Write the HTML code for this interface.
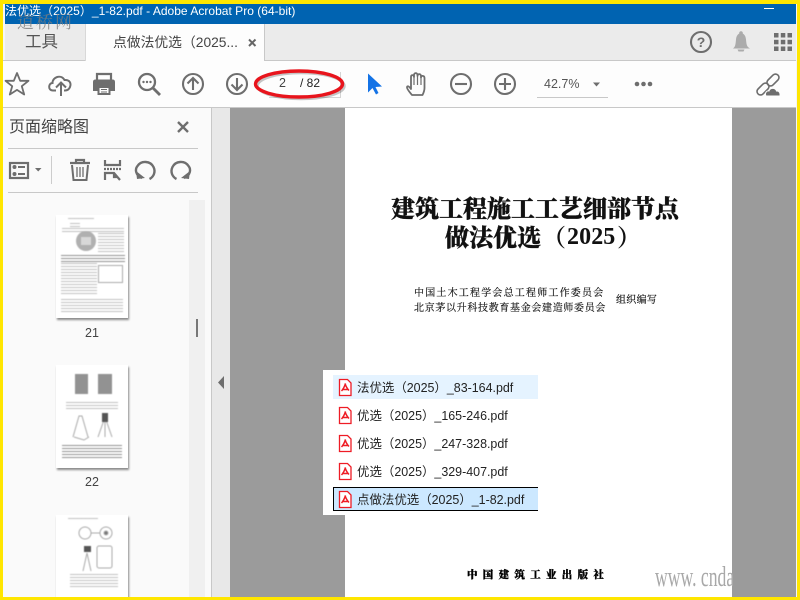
<!DOCTYPE html>
<html><head><meta charset="utf-8"><style>
html,body{margin:0;padding:0;width:800px;height:600px;overflow:hidden;background:#fff}
body{position:relative;font-family:"Liberation Sans","Noto Sans CJK SC",sans-serif}
.a{position:absolute;white-space:nowrap}
svg{position:absolute;overflow:visible}
.th{position:absolute;left:56px;width:72px;background:#fff;box-shadow:1px 2px 2px rgba(0,0,0,.45);overflow:hidden}
.th>.in{position:absolute;left:0;top:0;width:72px;height:110px;filter:blur(.45px)}
.ln{position:absolute;background:repeating-linear-gradient(to bottom,#777 0,#777 1px,#fff 1px,#fff 3px);opacity:.45}
.it{position:absolute;left:333px;width:205px;height:24px;box-sizing:border-box;font-size:12.45px;line-height:25px;color:#222}
.it span{position:absolute;left:24px;top:1px;white-space:nowrap}
.pg{font-family:"Noto Serif CJK SC","Liberation Serif",serif;color:#111}
</style></head><body>
<!-- chrome backgrounds -->
<div class="a" style="left:0;top:4px;width:800px;height:20px;background:#0063b1"></div>
<div class="a" style="left:0;top:24px;width:800px;height:36px;background:#ebebeb"></div>
<div class="a" style="left:3px;top:4px;width:2px;height:57px;background:#f6f6f6"></div>
<div class="a" style="left:0;top:60px;width:800px;height:1px;background:#c8c8c8"></div>
<div class="a" style="left:85px;top:24px;width:180px;height:37px;background:#fdfdfd;border-left:1px solid #d8d8d8;border-right:1px solid #c8c8c8;box-sizing:border-box"></div>
<div class="a" style="left:0;top:61px;width:800px;height:46px;background:#fdfdfd"></div>
<div class="a" style="left:0;top:107px;width:800px;height:1px;background:#c8c8c8"></div>
<!-- title -->
<div class="a" style="left:5px;top:4px;height:20px;line-height:15px;font-size:12px;color:#fff;letter-spacing:.02px">法优选（2025）_1-82.pdf - Adobe Acrobat Pro (64-bit)</div>
<div class="a" style="left:764px;top:8px;width:10px;height:1px;background:#fff"></div>
<div class="a" style="left:17px;top:9px;font-size:17px;line-height:24px;letter-spacing:2px;color:rgba(125,125,125,.8);font-family:'Noto Serif CJK SC',serif">道桥网</div>
<!-- tab row -->
<div class="a" style="left:25px;top:30px;font-size:16.5px;line-height:24px;color:#555">工具</div>
<div class="a" style="left:113px;top:33px;font-size:13.8px;line-height:20px;color:#444">点做法优选（2025...</div>
<svg style="left:0;top:0" width="800" height="110" fill="none">
<path d="M249 39.500l6.500 6.500M255.500 39.500l-6.500 6.500" stroke="#666" stroke-width="2"/>
<circle cx="701" cy="42" r="10" stroke="#6e6e6e" stroke-width="2.100"/>
<text x="701" y="47" text-anchor="middle" font-size="14" font-weight="bold" fill="#6e6e6e" font-family="Liberation Sans">?</text>
<path d="M733 48.500c2.500-2 2.500-4 3-9 .4-4 2-6 5-6.500 3 .5 4.600 2.500 5 6.500.5 5 .5 7 4 9z" fill="#ababab"/><circle cx="741" cy="33" r="1.800" fill="#ababab"/><path d="M737.500 49.500h7l-1 2h-5z" fill="#ababab"/>
<g fill="#6e6e6e"><rect x="774" y="33" width="4.500" height="4.500"/><rect x="780.800" y="33" width="4.500" height="4.500"/><rect x="787.500" y="33" width="4.500" height="4.500"/><rect x="774" y="39.800" width="4.500" height="4.500"/><rect x="780.800" y="39.800" width="4.500" height="4.500"/><rect x="787.500" y="39.800" width="4.500" height="4.500"/><rect x="774" y="46.500" width="4.500" height="4.500"/><rect x="780.800" y="46.500" width="4.500" height="4.500"/><rect x="787.500" y="46.500" width="4.500" height="4.500"/></g>
<!-- toolbar icons -->
<path d="M17 73l3.200 7.800h8.300l-6.700 5.400 2.400 8.300-7.200-4.600-7.200 4.600 2.400-8.300-6.700-5.400h8.300z" stroke="#6e6e6e" stroke-width="1.800" stroke-linejoin="round"/>
<path d="M57 90.500h-3c-5.500 0-4.500-7.500-.5-7.500 0-6 8.500-9 12-3 5-.5 7 3 5.500 7-.8 2-2.500 3.500-5 3.500h-1" stroke="#6e6e6e" stroke-width="2" transform="translate(-1 0)"/>
<path d="M61 96V83M56 87.500l5-5 5 5" stroke="#6e6e6e" stroke-width="2"/>
<path d="M97 80v-6h14v6" stroke="#6e6e6e" stroke-width="2.200"/>
<path d="M93 82q0-2.500 2.500-2.500h17q2.500 0 2.500 2.500v9h-5v-3h-12v3h-5z" fill="#6e6e6e"/>
<path d="M98.500 86h11v8h-11z" stroke="#6e6e6e" stroke-width="2"/><path d="M101 89.500h6M101 92h6" stroke="#6e6e6e"/>
<circle cx="147" cy="82" r="8" stroke="#6e6e6e" stroke-width="2.300"/><path d="M153 88l7 7" stroke="#6e6e6e" stroke-width="2.800"/>
<g fill="#6e6e6e"><circle cx="143.500" cy="82" r="1.200"/><circle cx="147" cy="82" r="1.200"/><circle cx="150.500" cy="82" r="1.200"/></g>
<circle cx="193" cy="84" r="10" stroke="#6e6e6e" stroke-width="2.100"/><path d="M193 90V78M187.500 83.500l5.500-5.500 5.500 5.500" stroke="#6e6e6e" stroke-width="2.100"/>
<circle cx="237" cy="84" r="10" stroke="#6e6e6e" stroke-width="2.100"/><path d="M237 78v12M231.500 84.500l5.500 5.500 5.500-5.500" stroke="#6e6e6e" stroke-width="2.100"/>
<path d="M368 73.500v19l4.500-4.500 3.500 6.500 2.500-1.500-3-6 6.500-.5z" fill="#1473e6"/>
<path d="M412 95c-1.500-2-5.500-6-5-8 .6-2 3 .5 4 2V77c0-2.500 3-2.500 3 0v-2c0-2.500 3.500-2.500 3.500 0v1c0-2.500 3.500-2.500 3.500 0v1.500c0-2.500 3.500-2 3.500 .5V88c0 3-1 5-2 7z" stroke="#6e6e6e" stroke-width="1.800" stroke-linejoin="round"/>
<path d="M414 77v8M417.500 76v9M421 77v8" stroke="#6e6e6e" stroke-width="1.200"/>
<circle cx="461" cy="84" r="10" stroke="#6e6e6e" stroke-width="2.100"/><path d="M455 84h12" stroke="#6e6e6e" stroke-width="2.100"/>
<circle cx="505" cy="84" r="10" stroke="#6e6e6e" stroke-width="2.100"/><path d="M499 84h12M505 78v12" stroke="#6e6e6e" stroke-width="2.100"/>
<path d="M593 82.500h7l-3.500 4z" fill="#6e6e6e"/>
<rect x="537" y="97" width="71" height="1" fill="#c8c8c8"/>
<g fill="#6e6e6e"><circle cx="637" cy="84" r="2.300"/><circle cx="643.500" cy="84" r="2.300"/><circle cx="650" cy="84" r="2.300"/></g>
<rect x="766" y="76.500" width="14" height="7" rx="3.500" transform="rotate(-45 773 80)" stroke="#6e6e6e" stroke-width="1.600"/>
<rect x="756" y="85.500" width="14" height="7" rx="3.500" transform="rotate(-45 763 89)" stroke="#6e6e6e" stroke-width="1.600"/>
<path d="M766 96c-1.500-3 .5-5.500 3-5 1-3.500 6.500-3.500 7.500 0 2.800-.5 4 2.500 3.500 5z" fill="#6e6e6e" stroke="#fdfdfd" stroke-width="1"/>
<!-- page number input + oval -->
<path d="M269 97.500h71M340.500 72v26" stroke="#d4d4d4"/>
<ellipse cx="301" cy="86" rx="43.500" ry="13" stroke="#444" stroke-width="2.500" opacity=".3"/>
<ellipse cx="299" cy="84" rx="43.500" ry="13" stroke="#e8141c" stroke-width="3.400"/>
</svg>
<div class="a" style="left:279px;top:75px;font-size:12.5px;line-height:16px;color:#444">2</div>
<div class="a" style="left:300px;top:75px;font-size:12px;line-height:16px;color:#222">/ 82</div>
<div class="a" style="left:544px;top:76px;font-size:12.5px;line-height:16px;color:#555">42.7%</div>
<!-- sidebar -->
<div class="a" style="left:0;top:108px;width:211px;height:492px;background:#fafafa"></div>
<div class="a" style="left:211px;top:108px;width:1px;height:492px;background:#c8c8c8"></div>
<div class="a" style="left:212px;top:108px;width:18px;height:492px;background:#e8e8e8"></div>
<div class="a" style="left:9px;top:116px;font-size:16px;line-height:24px;color:#444">页面缩略图</div>
<div class="a" style="left:8px;top:148px;width:190px;height:1px;background:#c8c8c8"></div>
<div class="a" style="left:8px;top:192px;width:190px;height:1px;background:#c8c8c8"></div>
<div class="a" style="left:51px;top:156px;width:1px;height:28px;background:#ccc"></div>
<div class="a" style="left:189px;top:200px;width:16px;height:400px;background:#f0f0f0"></div>
<div class="a" style="left:196px;top:319px;width:2px;height:18px;background:#777"></div>
<svg style="left:0;top:108px" width="230" height="300" fill="none">
<path d="M178 14l10 10M188 14l-10 10" stroke="#6e6e6e" stroke-width="2.400"/>
<rect x="10" y="55" width="18" height="15" stroke="#6e6e6e" stroke-width="2.200"/>
<g fill="#6e6e6e"><circle cx="14.500" cy="59" r="2"/><circle cx="14.500" cy="66" r="2"/><rect x="18" y="58" width="7" height="2"/><rect x="18" y="65" width="7" height="2"/></g>
<path d="M35 60h6.500l-3.300 3.500z" fill="#6e6e6e"/>
<path d="M70 55h20M76 54.500v-2.500h8v2.500" stroke="#6e6e6e" stroke-width="2.200"/>
<path d="M72 57l1.500 15h13l1.500-15" stroke="#6e6e6e" stroke-width="2"/><path d="M77 59v10M80 59v10M83 59v10" stroke="#6e6e6e" stroke-width="1.300"/>
<path d="M105 52v5h15v-5" stroke="#6e6e6e" stroke-width="2.200"/>
<path d="M104 61h17" stroke="#6e6e6e" stroke-width="2.200" stroke-dasharray="2 1"/>
<path d="M105 72v-7h9l6 7M114 65v4h4" stroke="#6e6e6e" stroke-width="2.200"/>
<path d="M143 71c-7-3-7-9-4.500-12 4-6 13-5 16 1 2.500 5 0 10-4 12" stroke="#6e6e6e" stroke-width="2.400" transform="translate(-1 -1)"/><path d="M136 63l1 8 8-1z" fill="#6e6e6e"/>
<path d="M185 71c7-3 7-9 4.500-12-4-6-13-5-16 1-2.500 5 0 10 4 12" stroke="#6e6e6e" stroke-width="2.400" transform="translate(-1 -1)"/><path d="M190 63l-1 8-8-1z" fill="#6e6e6e"/>
</svg>
<!-- thumbnails -->
<div class="th" style="top:215px;height:103px"><div class="in">
 <div class="ln" style="left:12px;top:3px;width:26px;height:2px"></div>
 <div class="ln" style="left:14px;top:8px;width:10px;height:5px"></div>
 <div class="ln" style="left:6px;top:13px;width:62px;height:4px"></div>
 <div style="position:absolute;left:20px;top:16px;width:20px;height:20px;border-radius:50%;background:#b0b0b0"></div>
 <div style="position:absolute;left:25px;top:22px;width:10px;height:8px;background:#d8d8d8"></div>
 <div class="ln" style="left:42px;top:18px;width:26px;height:20px"></div>
 <div class="ln" style="left:5px;top:40px;width:64px;height:7px;opacity:.8"></div>
 <div class="ln" style="left:5px;top:48px;width:36px;height:33px"></div>
 <div style="position:absolute;left:42px;top:50px;width:25px;height:18px;border:1px solid #aaa;box-sizing:border-box"></div>
 <div class="ln" style="left:5px;top:84px;width:62px;height:13px"></div>
</div></div>
<div class="th" style="top:365px;height:103px"><div class="in">
 <div style="position:absolute;left:19px;top:9px;width:13px;height:20px;background:#777;opacity:.8"></div>
 <div style="position:absolute;left:42px;top:9px;width:14px;height:20px;background:#777;opacity:.8"></div>
 <div class="ln" style="left:10px;top:37px;width:52px;height:7px"></div>
 <svg style="left:0;top:0" width="72" height="103" fill="none" stroke="#aaa"><path d="M17 72l6-21h3l6 21M18 72l10 3 5-3"/><path d="M42 72l6-17h2l6 17M49 55v17"/><rect x="46" y="48" width="6" height="9" fill="#555" stroke="none"/></svg>
 <div class="ln" style="left:6px;top:80px;width:60px;height:13px;opacity:.8"></div>
</div></div>
<div class="th" style="top:515px;height:90px"><div class="in">
 <div class="ln" style="left:12px;top:3px;width:30px;height:2px"></div>
 <svg style="left:0;top:0" width="72" height="90" fill="none" stroke="#aaa"><circle cx="29" cy="18" r="6"/><circle cx="50" cy="18" r="6"/><path d="M35 18h9"/><circle cx="50" cy="18" r="2" fill="#777"/><path d="M27 56l4-18 4 18"/><rect x="41" y="31" width="15" height="22" rx="2"/></svg>
 <div style="position:absolute;left:28px;top:31px;width:7px;height:6px;background:#555"></div>
 <div class="ln" style="left:14px;top:59px;width:48px;height:15px"></div>
</div></div>
<div class="a" style="left:0;top:325px;width:184px;text-align:center;font-size:12.5px;line-height:16px;color:#444">21</div>
<div class="a" style="left:0;top:474px;width:184px;text-align:center;font-size:12.5px;line-height:16px;color:#444">22</div>
<svg style="left:218px;top:376px" width="8" height="13"><path d="M6 0v13L0 6.500z" fill="#6e6e6e"/></svg>
<!-- document area -->
<div class="a" style="left:230px;top:108px;width:567px;height:492px;background:#9b9b9b"></div>
<div class="a" style="left:345px;top:108px;width:387px;height:492px;background:#fff"></div>
<div class="a pg" style="left:391px;top:191px;font-size:24px;line-height:32px;font-weight:900;-webkit-text-stroke:.3px #111">建筑工程施工工艺细部节点</div>
<div class="a pg" style="left:445px;top:220px;font-size:24px;line-height:32px;font-weight:900;-webkit-text-stroke:.3px #111">做法优选</div>
<div class="a pg" style="left:542px;top:220px;font-size:24px;line-height:32px;font-weight:700">（</div>
<div class="a" style="left:567px;top:221px;font-family:'Liberation Serif',serif;font-size:24px;line-height:32px;font-weight:700;color:#111;letter-spacing:.1px">2025</div>
<div class="a pg" style="left:617px;top:220px;font-size:24px;line-height:32px;font-weight:700">）</div>
<div class="a pg" style="left:414px;top:285px;font-size:10px;line-height:14px;letter-spacing:1.2px;-webkit-text-stroke:.15px #111">中国土木工程学会总工程师工作委员会</div>
<div class="a pg" style="left:414px;top:300px;font-size:10px;line-height:14px;letter-spacing:.67px;-webkit-text-stroke:.15px #111">北京茅以升科技教育基金会建造师委员会</div>
<div class="a pg" style="left:616px;top:292px;font-size:10px;line-height:14px;letter-spacing:.3px;-webkit-text-stroke:.15px #111">组织编写</div>
<div class="a pg" style="left:467px;top:567px;font-size:10.5px;line-height:16px;letter-spacing:5.3px;font-weight:900;color:#000;-webkit-text-stroke:.3px #000">中国建筑工业出版社</div>
<div class="a" style="left:655px;top:560px;width:78px;height:36px;overflow:hidden"><div style="font-family:'Liberation Serif',serif;font-size:28px;line-height:36px;color:#a8a8a8;transform:scaleX(.63);transform-origin:0 0;white-space:nowrap">www. cnda</div></div>
<!-- popup list -->
<div class="a" style="left:323px;top:370px;width:215px;height:145px;background:#fff"></div>
<div class="it" style="top:375px;background:#e5f3ff"><span>法优选（2025）_83-164.pdf</span></div>
<div class="it" style="top:403px"><span>优选（2025）_165-246.pdf</span></div>
<div class="it" style="top:431px"><span>优选（2025）_247-328.pdf</span></div>
<div class="it" style="top:459px"><span>优选（2025）_329-407.pdf</span></div>
<div class="it" style="top:487px;background:#cce8ff;border:1px solid #000;border-right:0;line-height:23px"><span style="left:23px;top:1px">点做法优选（2025）_1-82.pdf</span></div>
<svg style="left:0;top:0" width="800" height="600" fill="none">
<g stroke="#ee1c25" stroke-width="1.300">
<path d="M339.500 379.500h8l3.500 3.500v12.500h-11.500z" fill="#fff"/><path d="M345.500 383.500c-1 3-2.500 6-4 7.500M345 383.500c1 3 2.500 5.500 4 7M342 389.500h6" stroke-width="1.500"/>
<path d="M339.500 407.500h8l3.500 3.500v12.500h-11.500z" fill="#fff"/><path d="M345.500 411.500c-1 3-2.500 6-4 7.500M345 411.500c1 3 2.500 5.500 4 7M342 417.500h6" stroke-width="1.500"/>
<path d="M339.500 435.500h8l3.500 3.500v12.500h-11.500z" fill="#fff"/><path d="M345.500 439.500c-1 3-2.500 6-4 7.500M345 439.500c1 3 2.500 5.500 4 7M342 445.500h6" stroke-width="1.500"/>
<path d="M339.500 463.500h8l3.500 3.500v12.500h-11.500z" fill="#fff"/><path d="M345.500 467.500c-1 3-2.500 6-4 7.500M345 467.500c1 3 2.500 5.500 4 7M342 473.500h6" stroke-width="1.500"/>
<path d="M339.500 491.500h8l3.500 3.500v12.500h-11.500z" fill="#fff"/><path d="M345.500 495.500c-1 3-2.500 6-4 7.500M345 495.500c1 3 2.500 5.500 4 7M342 501.500h6" stroke-width="1.500"/>
</g></svg>
<!-- yellow frame -->
<div class="a" style="left:0;top:0;width:800px;height:4px;background:#ffe600"></div>
<div class="a" style="left:0;top:597px;width:800px;height:3px;background:#ffe600"></div>
<div class="a" style="left:0;top:0;width:3px;height:600px;background:#ffe600"></div>
<div class="a" style="left:797px;top:0;width:3px;height:600px;background:#ffe600"></div>
<div class="a" style="left:796px;top:4px;width:1px;height:593px;background:#f4f4f4"></div>
</body></html>
